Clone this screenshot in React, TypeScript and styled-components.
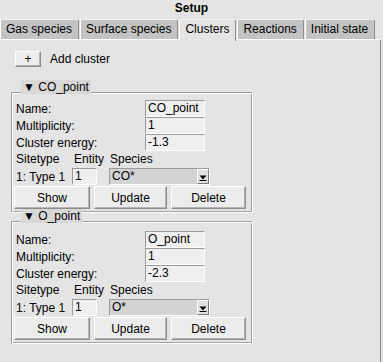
import React from 'react';
import styled, { createGlobalStyle } from 'styled-components';

const GlobalStyle = createGlobalStyle`
  html, body {
    margin: 0;
    padding: 0;
    background: #e4e4e4;
  }
  body {
    font-family: 'Liberation Sans', Arial, sans-serif;
    font-size: 12px;
    color: #000;
  }
`;

const Window = styled.div`
  width: 383px;
  height: 362px;
  background: #e4e4e4;
  display: flex;
  flex-direction: column;
  overflow: hidden;
`;

const Title = styled.div`
  height: 19px;
  line-height: 17px;
  text-align: center;
  font-weight: bold;
`;

const TabBar = styled.div`
  display: flex;
  gap: 1px;
  height: 20px;
  align-items: flex-start;
  position: relative;
  z-index: 1;
`;

const Tab = styled.div<{ $active?: boolean }>`
  height: ${(p) => (p.$active ? '21px' : '19px')};
  line-height: 18px;
  padding: 0 6px 0 5px;
  background: ${(p) => (p.$active ? '#e4e4e4' : '#c3c3c3')};
  border-top: 1px solid #f4f4f4;
  border-left: 1px solid #ffffff;
  border-right: 1px solid #8c8c8c;
  border-top-right-radius: 3px;
  white-space: nowrap;
`;

const Panel = styled.div`
  flex: 1;
  width: 381px;
  border-top: 1px solid #ffffff;
  border-right: 1px solid #8a8a8a;
  padding: 11px 0 0 11px;
  box-sizing: border-box;
`;

const AddRow = styled.div`
  display: flex;
  align-items: center;
  gap: 9px;
  margin-left: 4px;
  height: 16px;
`;

const RaisedButton = styled.div<{ $w: number; $h: number }>`
  width: ${(p) => p.$w}px;
  height: ${(p) => p.$h}px;
  box-sizing: border-box;
  background: #ececec;
  border-top: 1px solid #ffffff;
  border-left: 1px solid #ffffff;
  border-right: 1px solid #8c8c8c;
  border-bottom: 1px solid #8c8c8c;
  box-shadow: inset -1px -1px 0 #b4b4b4;
  display: flex;
  align-items: center;
  justify-content: center;
  user-select: none;
`;

const Frame = styled.div<{ $top: number }>`
  width: 242px;
  box-sizing: border-box;
  margin-top: ${(p) => p.$top}px;
  border-top: 1px solid #a0a0a0;
  border-left: 1px solid #a0a0a0;
  border-right: 1px solid #ffffff;
  border-bottom: 1px solid #ffffff;
  box-shadow: inset 1px 1px 0 #ffffff, inset -1px -1px 0 #a0a0a0;
  padding: 0 3px 3px 2px;
  display: flex;
  flex-direction: column;
`;

const Legend = styled.div<{ $gap: number }>`
  align-self: flex-start;
  margin: -13px 0 ${(p) => p.$gap}px 7px;
  height: 14px;
  line-height: 14px;
  padding: 0 2px 0 2px;
  background: #d8d8d8;
  white-space: nowrap;
`;

const FieldRow = styled.div`
  display: flex;
  align-items: center;
  height: 17px;
`;

const Label = styled.div<{ $w: number }>`
  width: ${(p) => p.$w}px;
  padding-left: 2px;
  box-sizing: border-box;
  white-space: nowrap;
`;

const Entry = styled.div<{ $w: number }>`
  width: ${(p) => p.$w}px;
  height: 17px;
  box-sizing: border-box;
  background: #efefef;
  border-top: 1px solid #9a9a9a;
  border-left: 1px solid #9a9a9a;
  border-right: 1px solid #ffffff;
  border-bottom: 1px solid #ffffff;
  padding-left: 2px;
  line-height: 15px;
  white-space: nowrap;
  overflow: hidden;
`;

const HeaderRow = styled.div`
  display: flex;
  height: 17px;
  line-height: 16px;
`;

const Combo = styled.div`
  width: 101px;
  height: 17px;
  margin-left: 12px;
  box-sizing: border-box;
  background: #d3d3d3;
  border-top: 1px solid #9a9a9a;
  border-left: 1px solid #9a9a9a;
  border-right: 1px solid #ffffff;
  border-bottom: 1px solid #ffffff;
  display: flex;
  align-items: center;
  justify-content: space-between;
  padding-left: 2px;
  line-height: 15px;
`;

const ComboArrow = styled.div`
  width: 12px;
  height: 15px;
  box-sizing: border-box;
  background: #e0e0e0;
  border-top: 1px solid #ffffff;
  border-left: 1px solid #ffffff;
  border-right: 1px solid #7a7a7a;
  border-bottom: 1px solid #7a7a7a;
  display: flex;
  align-items: flex-end;
  justify-content: center;
  padding-bottom: 2px;
`;

const ButtonRow = styled.div`
  display: flex;
  gap: 4px;
  margin-top: 1px;
`;

type Cluster = {
  name: string;
  multiplicity: string;
  energy: string;
  species: string;
};

const clusters: Cluster[] = [
  { name: 'CO_point', multiplicity: '1', energy: '-1.3', species: 'CO*' },
  { name: 'O_point', multiplicity: '1', energy: '-2.3', species: 'O*' },
];

const tabs = ['Gas species', 'Surface species', 'Clusters', 'Reactions', 'Initial state'];

function DownArrow() {
  return (
    <svg width="8" height="6" viewBox="0 0 8 6">
      <path d="M0.5 0.5 L7.5 0.5 L4 4.5 Z" fill="#000" />
      <rect x="0.5" y="5" width="7" height="1" fill="#000" />
    </svg>
  );
}

function ClusterFrame({ cluster, top, gap }: { cluster: Cluster; top: number; gap: number }) {
  return (
    <Frame $top={top}>
      <Legend $gap={gap}>▼ {cluster.name}</Legend>
      <FieldRow>
        <Label $w={131}>Name:</Label>
        <Entry $w={60}>{cluster.name}</Entry>
      </FieldRow>
      <FieldRow>
        <Label $w={131}>Multiplicity:</Label>
        <Entry $w={60}>{cluster.multiplicity}</Entry>
      </FieldRow>
      <FieldRow>
        <Label $w={131}>Cluster energy:</Label>
        <Entry $w={60}>{cluster.energy}</Entry>
      </FieldRow>
      <HeaderRow>
        <Label $w={58}>Sitetype</Label>
        <Label $w={36}>Entity</Label>
        <Label $w={60}>Species</Label>
      </HeaderRow>
      <FieldRow>
        <Label $w={58}>1: Type 1</Label>
        <Entry $w={25}>1</Entry>
        <Combo>
          <span>{cluster.species}</span>
          <ComboArrow>
            <DownArrow />
          </ComboArrow>
        </Combo>
      </FieldRow>
      <ButtonRow>
        <RaisedButton $w={76} $h={23}>Show</RaisedButton>
        <RaisedButton $w={73} $h={23}>Update</RaisedButton>
        <RaisedButton $w={75} $h={23}>Delete</RaisedButton>
      </ButtonRow>
    </Frame>
  );
}

export default function App() {
  return (
    <Window>
      <GlobalStyle />
      <Title>Setup</Title>
      <TabBar>
        {tabs.map((t) => (
          <Tab key={t} $active={t === 'Clusters'}>
            {t}
          </Tab>
        ))}
      </TabBar>
      <Panel>
        <AddRow>
          <RaisedButton $w={26} $h={16}>+</RaisedButton>
          <span>Add cluster</span>
        </AddRow>
        <ClusterFrame cluster={clusters[0]} top={25} gap={6} />
        <ClusterFrame cluster={clusters[1]} top={8} gap={8} />
      </Panel>
    </Window>
  );
}
